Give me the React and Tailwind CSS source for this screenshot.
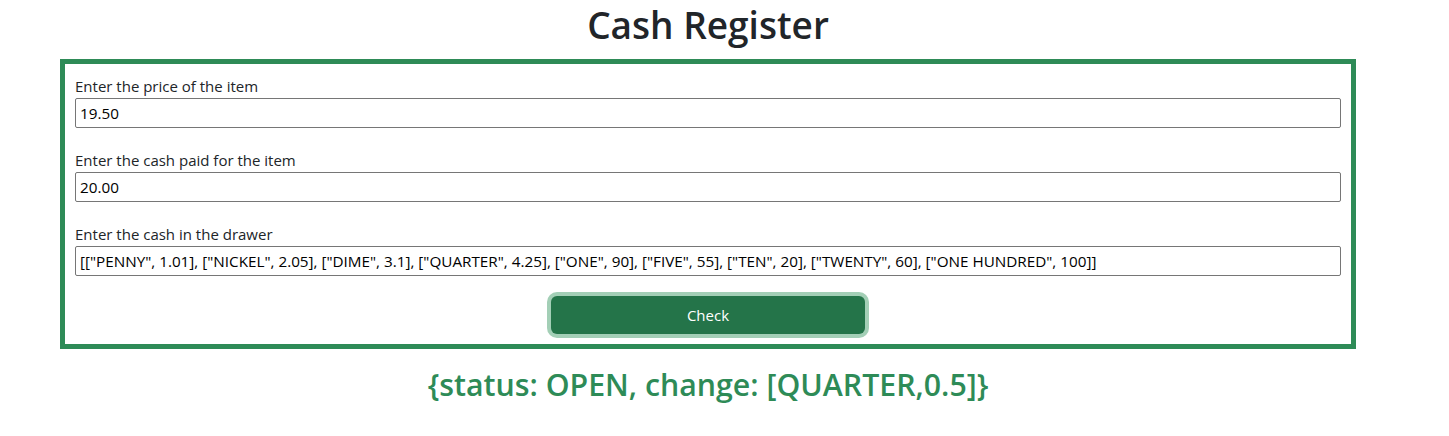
import { useState } from 'react';

const FIELDS = [
  { id: 'price', label: 'Enter the price of the item', value: '19.50' },
  { id: 'cash', label: 'Enter the cash paid for the item', value: '20.00' },
  {
    id: 'cid',
    label: 'Enter the cash in the drawer',
    value: '[["PENNY", 1.01], ["NICKEL", 2.05], ["DIME", 3.1], ["QUARTER", 4.25], ["ONE", 90], ["FIVE", 55], ["TEN", 20], ["TWENTY", 60], ["ONE HUNDRED", 100]]',
  },
];

export default function App() {
  const [values, setValues] = useState(() => Object.fromEntries(FIELDS.map(f => [f.id, f.value])));

  return (
    <div className="min-h-screen bg-white text-[#212529] font-['Open_Sans',sans-serif]">
      <div className="w-[1296px] ml-[60px] flex flex-col items-center">
        <h1 className="text-[37px] font-semibold leading-[48px] pt-[1px] mb-[10px]">Cash Register</h1>

        <div className="w-full border-[5px] border-[#2e8b57] px-[10px] pt-[10px] pb-[10px] flex flex-col gap-[20px]">
          {FIELDS.map(f => (
            <div key={f.id} className="flex flex-col">
              <label htmlFor={f.id} className="text-[15px] leading-[24px]">{f.label}</label>
              <input
                id={f.id}
                value={values[f.id]}
                onChange={e => setValues(v => ({ ...v, [f.id]: e.target.value }))}
                className="h-[30px] w-full border border-[#767676] rounded-[2px] px-[4px] text-[15.25px] text-black outline-none"
              />
            </div>
          ))}
          <div className="flex justify-center">
            <button className="w-[314px] h-[38px] rounded-[6px] bg-[#247449] text-white text-[15px] ring-4 ring-[#a3cfb6]">
              Check
            </button>
          </div>
        </div>

        <h2 className="mt-[17px] text-[30.3px] font-semibold leading-[38px] text-[#2e8b57]">
          {'{status: OPEN, change: [QUARTER,0.5]}'}
        </h2>
      </div>
    </div>
  );
}
